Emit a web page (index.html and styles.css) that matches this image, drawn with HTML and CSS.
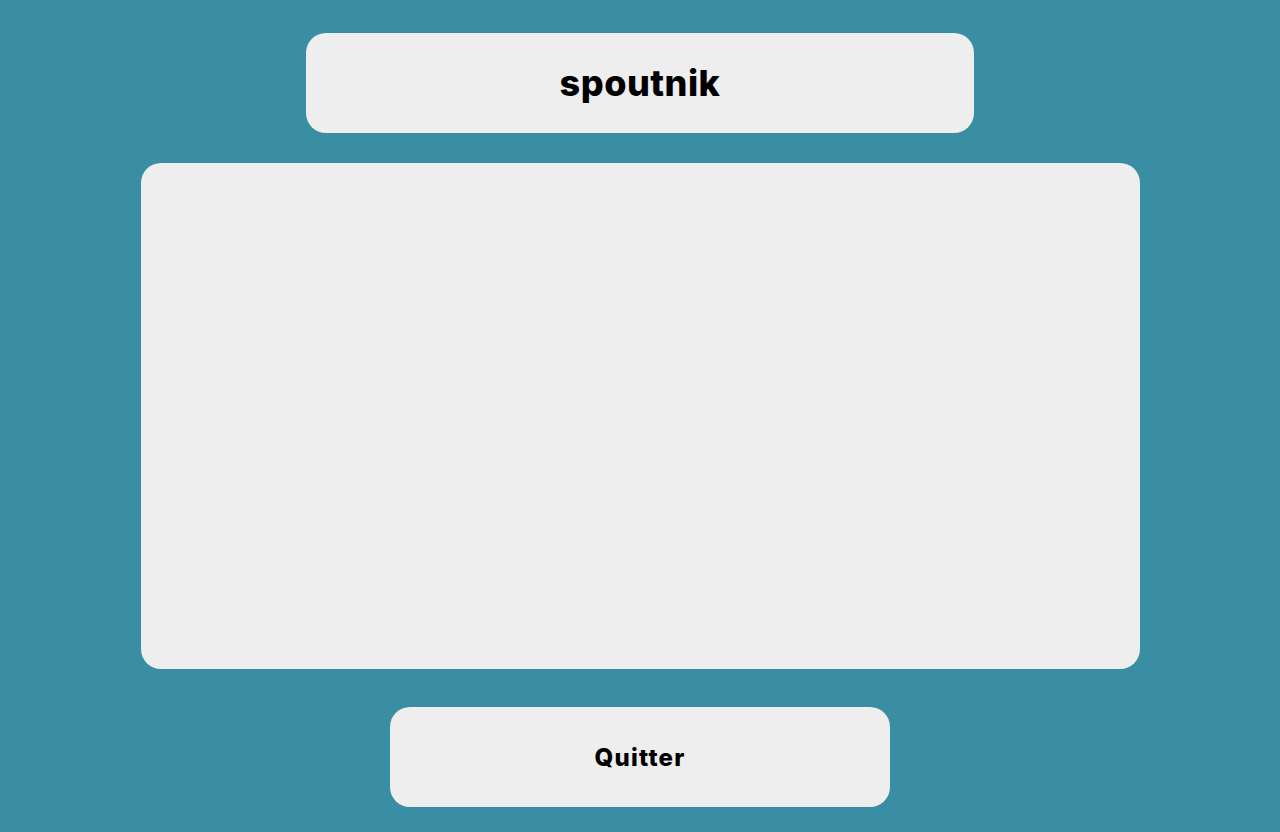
FILE: index.html
```html
<!DOCTYPE html>
<html lang="fr">
<head>
<meta charset="utf-8">
<title>spoutnik</title>
<link rel="stylesheet" href="styles.css">
</head>
<body>
<main class="app">
  <header class="title-card"><h1 class="title">spoutnik</h1></header>
  <section class="panel"></section>
  <button class="quit" type="button">Quitter</button>
</main>
</body>
</html>
```
FILE: styles.css
```css
html, body {
  margin: 0;
  padding: 0;
  height: 100%;
}
body {
  background: #398ea4;
  font-family: Inter, "Noto Sans", sans-serif;
  color: #000;
}
.app {
  display: flex;
  flex-direction: column;
  align-items: center;
  padding-top: 33px;
}
.title-card {
  width: 668px;
  height: 100px;
  background: #eeeeee;
  border-radius: 20px;
  display: flex;
  align-items: center;
  justify-content: center;
}
.title {
  margin: 0;
  font-size: 36px;
  font-weight: 800;
  line-height: 1;
  letter-spacing: 0.5px;
}
.panel {
  margin-top: 30px;
  width: 999px;
  height: 506px;
  background: #eeeeee;
  border-radius: 20px;
}
.quit {
  margin-top: 38px;
  width: 500px;
  height: 100px;
  background: #eeeeee;
  border: none;
  border-radius: 20px;
  font-family: inherit;
  font-size: 24px;
  font-weight: 800;
  letter-spacing: 1.2px;
  color: #000;
  cursor: pointer;
  padding: 0;
}
```
